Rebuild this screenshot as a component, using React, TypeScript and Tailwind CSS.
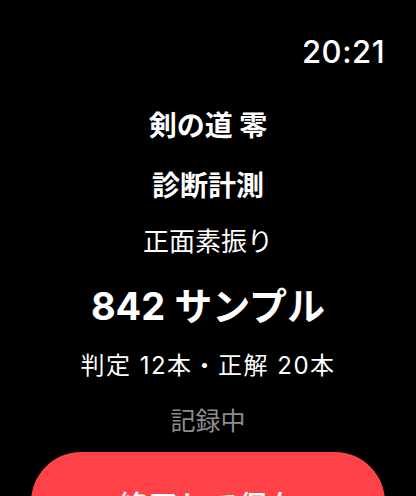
import React from "react";

const latin = "font-['Inter','Noto_Sans_CJK_JP',sans-serif]";

export default function App() {
  return (
    <div
      className={`h-[496px] w-full overflow-hidden bg-black text-white ${latin}`}
    >
      {/* Status bar */}
      <div className="flex justify-end pt-[34px] pr-[31px]">
        <span className="text-[31px] leading-[36px] font-medium tracking-[0.5px]">
          20:21
        </span>
      </div>

      {/* Session info */}
      <div className="flex flex-col items-center text-center">
        <div className="mt-[36px] text-[28px] leading-[40px] font-bold">
          剣の道 零
        </div>
        <div className="mt-[20px] text-[28px] leading-[40px] font-bold">
          診断計測
        </div>
        <div className="mt-[16px] text-[26px] leading-[40px]">正面素振り</div>
        <div className="mt-[20px] text-[38px] leading-[48px] font-bold">
          842 サンプル
        </div>
        <div className="mt-[18px] text-[24px] leading-[36px] tracking-[1.5px]">
          判定 12本・正解 20本
        </div>
        <div className="mt-[19px] text-[25px] leading-[36px] text-[#8d8d8d]">
          記録中
        </div>
      </div>

      {/* Stop button */}
      <button className="mx-[31px] mt-[13px] flex h-[108px] w-[354px] items-center justify-center rounded-[50px] bg-[#fe4247] text-[30px] font-medium text-white">
        終了して保存
      </button>
    </div>
  );
}
